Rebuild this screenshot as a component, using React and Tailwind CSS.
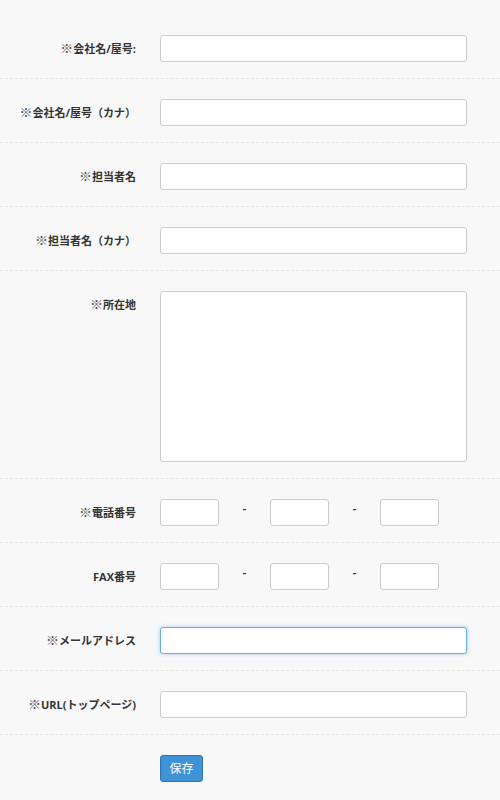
import React from "react";

const font = { fontFamily: '"Open Sans", "Noto Sans CJK JP", sans-serif' };

function Label({ req, children }) {
  return (
    <div className="w-[136px] h-[27px] shrink-0 text-right text-[11px] font-bold text-[#333] leading-[27px] whitespace-nowrap">
      {req && (
        <span className="text-[13px] leading-[0px] font-bold text-[#555]" style={{ fontFamily: '"Noto Sans CJK JP", sans-serif' }}>
          ※
        </span>
      )}
      {children}
    </div>
  );
}

function Row({ label, req = true, children }) {
  return (
    <div className="flex gap-[24px] pt-[20px] pb-[16px] border-b border-dashed border-[#e6e6e6]">
      <Label req={req}>{label}</Label>
      <div className="flex">{children}</div>
    </div>
  );
}

const inputCls =
  "block h-[27px] bg-white border border-[#cccccc] rounded-[3px] outline-none";

function Text({ focus }) {
  return (
    <input
      className={
        focus
          ? "block h-[27px] w-[307px] bg-white border border-[#66afe9] rounded-[3px] outline-none shadow-[0_0_4px_rgba(102,175,233,0.6)]"
          : inputCls + " w-[307px]"
      }
    />
  );
}

function Tel() {
  return (
    <div className="flex items-start">
      <input className={inputCls + " w-[59px]"} />
      <span className="w-[51px] text-center text-[11px] font-bold text-[#333] leading-[18px]">-</span>
      <input className={inputCls + " w-[59px]"} />
      <span className="w-[51px] text-center text-[11px] font-bold text-[#333] leading-[18px]">-</span>
      <input className={inputCls + " w-[59px]"} />
    </div>
  );
}

export default function App() {
  return (
    <div className="w-[500px] h-[800px] bg-[#f8f8f8] pt-[15px]" style={font}>
      <Row label="会社名/屋号:">
        <Text />
      </Row>
      <Row label="会社名/屋号（カナ）">
        <Text />
      </Row>
      <Row label="担当者名">
        <Text />
      </Row>
      <Row label="担当者名（カナ）">
        <Text />
      </Row>
      <Row label="所在地">
        <textarea className="block h-[171px] w-[307px] bg-white border border-[#cccccc] rounded-[3px] outline-none resize-none" />
      </Row>
      <Row label="電話番号">
        <Tel />
      </Row>
      <Row label="FAX番号" req={false}>
        <Tel />
      </Row>
      <Row label="メールアドレス">
        <Text focus />
      </Row>
      <Row label="URL(トップページ)">
        <Text />
      </Row>
      <div className="flex gap-[24px] pt-[20px]">
        <div className="w-[136px] shrink-0" />
        <button className="h-[27px] w-[43px] bg-[#3f93d6] border border-[#2f74b0] rounded-[3px] text-white text-[12px] leading-none">
          保存
        </button>
      </div>
    </div>
  );
}
